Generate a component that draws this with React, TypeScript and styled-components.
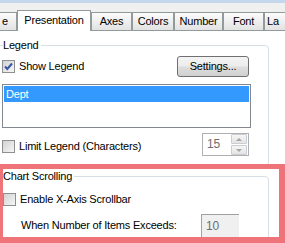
import styled, { createGlobalStyle } from 'styled-components';

const GlobalStyle = createGlobalStyle`
    body {
        margin: 0;
        background: #ffffff;
    }
`

const Frame = styled.div`
    position: relative;
    width: 285px;
    height: 243px;
    overflow: hidden;
    background: #ffffff;
    font-family: "Liberation Sans", Arial, sans-serif;
    font-size: 11px;
    letter-spacing: -0.2px;
    line-height: 15px;
    color: #000000;
    white-space: nowrap;
`

const TabStrip = styled.div`
    display: flex;
    align-items: flex-end;
    height: 31px;
    background: linear-gradient(#c5d7ed 0 3px, #f0f0f0 3px);
`

const Tab = styled.div<{ $active?: boolean; $w: number; $left?: boolean; $cut?: boolean }>`
    box-sizing: border-box;
    flex-shrink: 0;
    display: flex;
    align-items: center;
    justify-content: ${p => p.$left ? 'flex-start' : 'center'};
    width: ${p => p.$w}px;
    height: ${p => p.$active ? 21 : 19}px;
    padding: ${p => p.$left ? '0 0 0 2px' : '0'};
    padding-bottom: ${p => p.$active ? 2 : 0}px;
    border: 1px solid #919b9c;
    border-left: ${p => p.$cut ? 'none' : '1px solid #919b9c'};
    border-bottom: ${p => p.$active ? 'none' : '1px solid #919b9c'};
    background: ${p => p.$active ? '#ffffff' : 'linear-gradient(#fcfcfc, #e2e2e2)'};
    overflow: hidden;
`

const Group = styled.fieldset<{ $mt: number }>`
    box-sizing: border-box;
    width: 275px;
    min-width: 0;
    margin: ${p => p.$mt}px 0 0 -6px;
    padding: 0;
    border: 1px solid #d5dfe5;
    border-radius: 4px;
`

const GroupTitle = styled.legend`
    margin-left: 8px;
    padding: 0 2px 0 0;
    line-height: 15px;
`

const GroupBody = styled.div<{ $pl: number; $pb: number }>`
    padding: 0 17px ${p => p.$pb}px ${p => p.$pl}px;
`

const Row = styled.div<{ $mt: number; $h: number }>`
    display: flex;
    align-items: center;
    justify-content: space-between;
    height: ${p => p.$h}px;
    margin-top: ${p => p.$mt}px;
`

const CheckLabel = styled.label<{ $shift?: number; $gap: number }>`
    display: flex;
    align-items: center;
    gap: ${p => p.$gap}px;
    margin-top: ${p => p.$shift || 0}px;
`

const Box = styled.span`
    box-sizing: border-box;
    display: flex;
    align-items: center;
    justify-content: center;
    width: 13px;
    height: 13px;
    border: 1px solid #8e8f8f;
    background: linear-gradient(135deg, #d2d2d2, #f6f6f6);
`

const Button = styled.div`
    box-sizing: border-box;
    display: flex;
    align-items: center;
    justify-content: center;
    width: 72px;
    height: 21px;
    margin-right: 2px;
    border: 1px solid #707070;
    border-radius: 3px;
    background: linear-gradient(#f4f4f4, #ececec 48%, #dedede 52%, #d0d0d0);
`

const ListBox = styled.div`
    box-sizing: border-box;
    height: 44px;
    margin-top: 7px;
    padding: 1px;
    border: 1px solid #828790;
`

const ListItem = styled.div<{ $selected?: boolean }>`
    height: 16px;
    padding-left: 2px;
    line-height: 16px;
    background: ${p => p.$selected ? '#3399ff' : 'transparent'};
    color: ${p => p.$selected ? '#ffffff' : '#000000'};
`

const Spin = styled.div`
    box-sizing: border-box;
    display: flex;
    align-items: center;
    justify-content: space-between;
    width: 47px;
    height: 23px;
    margin-right: 2px;
    padding: 0 1px 0 4px;
    border: 1px solid #b0b0b0;
    color: #6d6d6d;
    font-size: 12px;
`

const SpinButtons = styled.div`
    display: flex;
    flex-direction: column;
    gap: 1px;
`

const SpinButton = styled.div<{ $up?: boolean }>`
    box-sizing: border-box;
    display: flex;
    align-items: center;
    justify-content: center;
    width: 16px;
    height: 10px;
    border: 1px solid #c8ced6;
    border-radius: 1px;
    background: linear-gradient(#f6f6f6, #e4e4e4);

    &:after {
        content: "";
        border-left: 3px solid transparent;
        border-right: 3px solid transparent;
        border-${p => p.$up ? 'bottom' : 'top'}: 3px solid #a6a6a6;
    }
`

const Caption = styled.span<{ $ml: number }>`
    margin-left: ${p => p.$ml}px;
`

const NumberBox = styled.div`
    box-sizing: border-box;
    display: flex;
    align-items: center;
    width: 38px;
    height: 23px;
    margin-left: auto;
    margin-right: 12px;
    padding-left: 4px;
    border-left: 1px solid #a0a0a0;
    border-top: 1px solid #a0a0a0;
    background: #f0f0f0;
    color: #6d6d6d;
    font-size: 12px;
`

const Highlight = styled.div`
    position: absolute;
    box-sizing: border-box;
    left: -2px;
    top: 164px;
    width: 287px;
    height: 79px;
    border-style: solid;
    border-color: #ee7479;
    border-width: 5px 6px 6px 5px;
    pointer-events: none;
`

function CheckBox({ checked }: { checked?: boolean }) {
    return (
        <Box>
            {checked && (
                <svg width="9" height="9" viewBox="0 0 9 9">
                    <path d="M1 4.5 L3.3 7 L8 1.5" fill="none" stroke="#3456a8" strokeWidth="2" />
                </svg>
            )}
        </Box>
    )
}

function App() {
    return (
        <>
            <GlobalStyle />
            <Frame>
                <TabStrip>
                    <Tab $w={17} $left $cut>e</Tab>
                    <Tab $w={74} $active>Presentation</Tab>
                    <Tab $w={41}>Axes</Tab>
                    <Tab $w={42}>Colors</Tab>
                    <Tab $w={49}>Number</Tab>
                    <Tab $w={41}>Font</Tab>
                    <Tab $w={30} $left>La</Tab>
                </TabStrip>

                <Group $mt={7}>
                    <GroupTitle>Legend</GroupTitle>
                    <GroupBody $pl={7} $pb={9}>
                        <Row $mt={3} $h={21}>
                            <CheckLabel $gap={4}><CheckBox checked />Show Legend</CheckLabel>
                            <Button>Settings...</Button>
                        </Row>
                        <ListBox>
                            <ListItem $selected>Dept</ListItem>
                        </ListBox>
                        <Row $mt={5} $h={23}>
                            <CheckLabel $gap={4} $shift={4}><CheckBox />Limit Legend (Characters)</CheckLabel>
                            <Spin>
                                15
                                <SpinButtons>
                                    <SpinButton $up />
                                    <SpinButton />
                                </SpinButtons>
                            </Spin>
                        </Row>
                    </GroupBody>
                </Group>

                <Group $mt={3}>
                    <GroupTitle>Chart Scrolling</GroupTitle>
                    <GroupBody $pl={8} $pb={20}>
                        <Row $mt={8} $h={15}>
                            <CheckLabel $gap={4}><CheckBox />Enable X-Axis Scrollbar</CheckLabel>
                        </Row>
                        <Row $mt={7} $h={23}>
                            <Caption $ml={18}>When Number of Items Exceeds:</Caption>
                            <NumberBox>10</NumberBox>
                        </Row>
                    </GroupBody>
                </Group>

                <Highlight />
            </Frame>
        </>
    )
}

export default App
